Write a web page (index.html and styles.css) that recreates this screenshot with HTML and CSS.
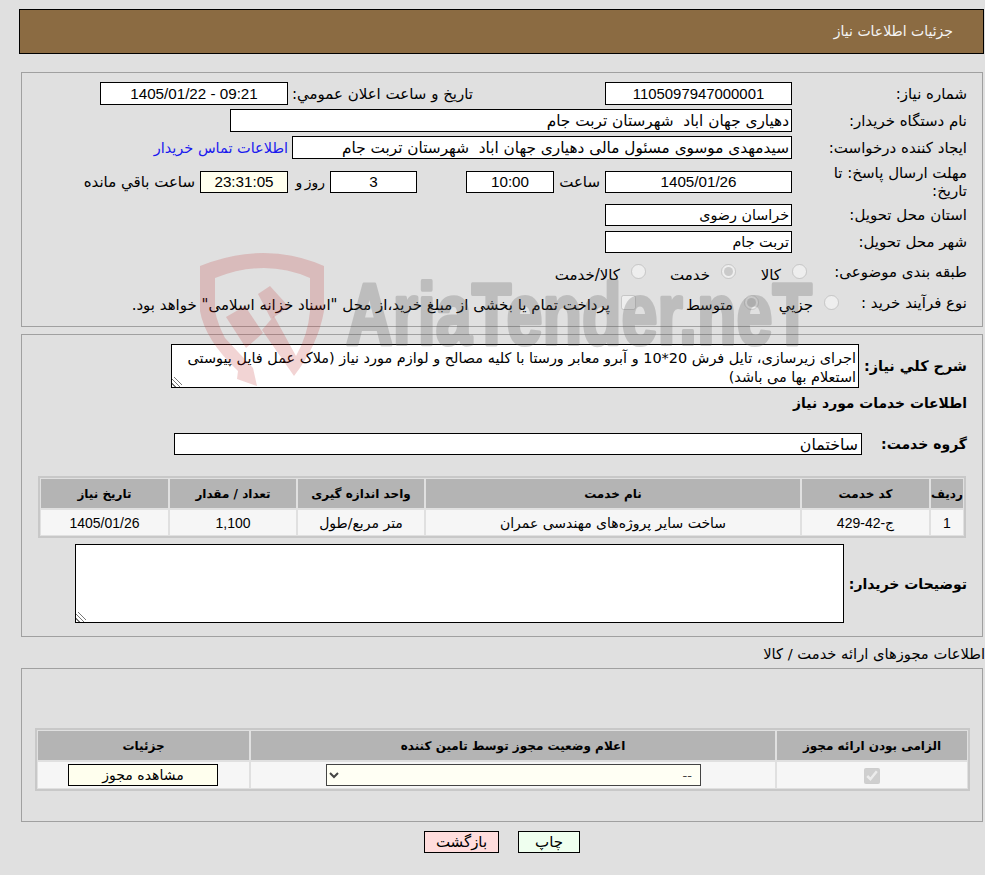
FILE: index.html
```html
<!DOCTYPE html>
<html lang="fa" dir="rtl">
<head>
<meta charset="utf-8">
<title>جزئیات اطلاعات نیاز</title>
<link rel="stylesheet" href="styles.css">
</head>
<body>
<div class="page-title">جزئیات اطلاعات نیاز</div>

<section class="panel panel-main">
  <div class="row r23">
    <div class="label">شماره نیاز:</div>
    <input class="box w187 center num id-num" readonly value="1105097947000001">
    <div class="mid-label">تاریخ و ساعت اعلان عمومي:</div>
    <input class="box w188 center num" readonly value="09:21 - 1405/01/22">
  </div>
  <div class="row r23 mt4">
    <div class="label">نام دستگاه خریدار:</div>
    <input class="box w562 wide-text" readonly value="دهیاری جهان اباد  شهرستان تربت جام">
  </div>
  <div class="row r23 mt4">
    <div class="label">ایجاد کننده درخواست:</div>
    <input class="box w500 wide-text" readonly value="سیدمهدی موسوی مسئول مالی دهیاری جهان اباد  شهرستان تربت جام">
    <a class="contact" href="#">اطلاعات تماس خریدار</a>
  </div>
  <div class="row r33 mt6">
    <div class="label">مهلت ارسال پاسخ: تا تاریخ:</div>
    <input class="box w187 center num" readonly value="1405/01/26">
    <span class="txt ml-hour">ساعت</span>
    <input class="box w88 center num" readonly value="10:00">
    <input class="box w87 center num gap-days" readonly value="3">
    <span class="txt ml-day">روز و</span>
    <input class="box w88 center num pale" readonly value="23:31:05">
    <span class="txt ml-left">ساعت باقي مانده</span>
  </div>
  <div class="row r22 mt6">
    <div class="label">استان محل تحویل:</div>
    <input class="box w187 small-text" readonly value="خراسان رضوی">
  </div>
  <div class="row r22 mt5">
    <div class="label">شهر محل تحویل:</div>
    <input class="box w187 small-text" readonly value="تربت جام">
  </div>
  <div class="row r28 mt5 row-cat">
    <div class="label label-cat">طبقه بندی موضوعی:</div>
    <input type="radio" disabled class="radio">
    <span class="opt-text o45">كالا</span>
    <input type="radio" disabled checked class="radio">
    <span class="opt-text o64">خدمت</span>
    <input type="radio" disabled class="radio">
    <span class="opt-text">كالا/خدمت</span>
  </div>
  <div class="row r28 mt3 row-proc">
    <div class="label label-proc">نوع فرآیند خرید :</div>
    <input type="radio" disabled class="radio">
    <span class="opt-text o54">جزيي</span>
    <input type="radio" disabled checked class="radio">
    <span class="opt-text o97">متوسط</span>
    <input type="checkbox" disabled class="check">
    <span class="opt-text">پرداخت تمام یا بخشی از مبلغ خرید،از محل "اسناد خزانه اسلامی" خواهد بود.</span>
  </div>
</section>

<section class="panel panel-items">
  <div class="row desc-row">
    <div class="label strong desc-label">شرح كلي نياز:</div>
    <textarea class="area desc" readonly>اجرای زیرسازی، تایل فرش 20*10 و آبرو معابر ورستا با کلیه مصالح و لوازم مورد نیاز (ملاک عمل فایل پیوستی استعلام بها می باشد)</textarea>
  </div>
  <h2 class="section-head">اطلاعات خدمات مورد نياز</h2>
  <div class="row group-row">
    <div class="label strong group-label">گروه خدمت:</div>
    <input class="box w688 group-input" readonly value="ساختمان">
  </div>
  <table class="grid grid-items">
    <thead>
      <tr><th class="c-rad">ردیف</th><th class="c-code">کد خدمت</th><th class="c-name">نام خدمت</th><th class="c-unit">واحد اندازه گیری</th><th class="c-qty">تعداد / مقدار</th><th class="c-date">تاریخ نیاز</th></tr>
    </thead>
    <tbody>
      <tr><td class="num">1</td><td class="num">ج-42-429</td><td>ساخت سایر پروژه‌های مهندسی عمران</td><td>متر مربع/طول</td><td class="num">1,100</td><td class="num">1405/01/26</td></tr>
    </tbody>
  </table>
  <div class="row notes-row">
    <div class="label strong notes-label">توضیحات خریدار:</div>
    <textarea class="area notes" readonly></textarea>
  </div>
</section>

<div class="permits-title">اطلاعات مجوزهای ارائه خدمت / کالا</div>
<section class="panel panel-permits">
  <table class="grid grid-permits">
    <thead>
      <tr><th class="p-req">الزامی بودن ارائه مجوز</th><th class="p-status">اعلام وضعیت مجوز توسط تامین کننده</th><th class="p-detail">جزئیات</th></tr>
    </thead>
    <tbody>
      <tr>
        <td><input type="checkbox" checked disabled class="req-check"></td>
        <td><select class="status" disabled><option>--</option></select></td>
        <td><button type="button" class="view-btn">مشاهده مجوز</button></td>
      </tr>
    </tbody>
  </table>
</section>

<div class="actions">
  <button type="button" class="btn btn-print">چاپ</button>
  <button type="button" class="btn btn-back">بازگشت</button>
</div>

<svg class="watermark" viewBox="0 0 985 875" aria-hidden="true">
  <path class="wm-red" d="M200 266 Q265 240 324 266 L324 311 Q318 345 294 376 L262 330 L274 316 L296 356 Q308 335 310 311 L310 278 Q265 258 215 278 L215 311 Q218 325 225 338 L253 368 L257 386 L237 379 L238 371 Q205 340 200 311 Z"/>
  <path class="wm-red" d="M270 286 L289 307 L271 319 L258 294 Z"/>
  <path class="wm-red" d="M245 306 L263 333 L246 348 L226 317 Z"/>
  <text class="wm-text" x="346" y="344" textLength="466" lengthAdjust="spacingAndGlyphs">AriaTender.neT</text>
</svg>
</body>
</html>
```
FILE: styles.css
```css
* { box-sizing: border-box; }
html, body { margin: 0; padding: 0; }
body {
  position: relative;
  height: 875px;
  overflow: hidden;
  background: #e0e0e0;
  color: #000;
  font-family: "DejaVu Sans", sans-serif;
  font-size: 15px;
  padding-top: 9px;
}
input, textarea, select, button { font-family: inherit; font-size: inherit; color: #000; }

.page-title {
  height: 45px;
  margin: 0 1px 0 19px;
  padding: 0 30px;
  border: 1px solid #000;
  background: #8b6b42;
  color: #f4f4f4;
  line-height: 42px;
  font-size: 14px;
}

.panel { margin: 0 2px 0 21px; border: 1px solid #a0a0a0; }
.panel-main { margin-top: 18px; height: 255px; padding-top: 9px; }
.panel-items { margin-top: 7px; height: 303px; padding-top: 9px; }
.panel-permits { margin-top: 5px; height: 154px; padding: 59px 12px 0 13px; }

.row { display: flex; align-items: center; }
.r22 { height: 22px; }
.r23 { height: 23px; }
.r28 { height: 28px; }
.r33 { height: 33px; }
.mt3 { margin-top: 3px; }
.mt4 { margin-top: 4px; }
.mt5 { margin-top: 5px; }
.mt6 { margin-top: 6px; }

.label { flex: none; width: 190px; padding-right: 15px; padding-left: 8px; line-height: 18px; }
.label-cat { width: 175px; }
.label-proc { width: 143px; }
.strong { font-weight: bold; font-size: 14px; }

.box {
  flex: none;
  height: 22px;
  padding: 0 2px;
  border: 1px solid #000;
  border-radius: 0;
  outline: 0;
  background: #fff;
  text-align: right;
}
.r23 .box { height: 23px; }
.center { text-align: center; }
.num { font-family: "Liberation Sans", "DejaVu Sans", sans-serif; font-size: 15.2px; }
.id-num { font-size: 14.9px; }
.wide-text { font-size: 15.3px; }
.small-text { font-size: 14.3px; }
.group-input { padding-right: 3px; font-size: 15.8px; }
.pale { background: #ffffee; }
.w87 { width: 87px; }
.w88 { width: 88px; }
.w187 { width: 187px; }
.w188 { width: 188px; }
.w500 { width: 500px; }
.w562 { width: 562px; }
.w688 { width: 688px; }

.mid-label { flex: none; width: 317px; padding-right: 132px; white-space: nowrap; }
.contact { margin-right: 4px; color: #1a1aee; font-size: 14.5px; text-decoration: none; white-space: nowrap; }
.txt { flex: none; white-space: nowrap; }
.ml-hour { margin: 0 5px; width: 41px; }
.gap-days { margin-right: 49px; }
.ml-day { margin: 0 5px; width: 32px; font-size: 14px; word-spacing: -2px; }
.ml-left { margin-right: 5px; }

.radio, .check { flex: none; width: 15px; height: 15px; margin: 0 0 2px; }
.opt-text { flex: none; margin-right: 11px; white-space: nowrap; }
.row-cat .opt-text { padding-top: 5px; }
.row-proc .opt-text { padding-top: 3px; }
.o45 { width: 45px; }
.o54 { width: 54px; }
.o64 { width: 64px; }
.o97 { width: 97px; }

.desc-row { height: 44px; }
.desc-label { width: 123px; padding-left: 0; font-size: 14.4px; }
.area {
  flex: none;
  display: block;
  border: 1px solid #000;
  border-radius: 0;
  outline: 0;
  background: #fff;
  padding: 4px 2px 0;
  font-size: 14.45px;
  line-height: 19px;
}
.area::-webkit-resizer {
  background: linear-gradient(45deg, transparent 2px, #777 2px 3px, transparent 3px 5px, #777 5px 6px, transparent 6px 8px, #777 8px 9px, transparent 9px) left bottom / 10px 10px no-repeat;
}
.desc { width: 688px; height: 44px; }
.section-head { margin: 6px 15px 0 0; font-size: 13.9px; line-height: 18px; font-weight: bold; }
.group-row { height: 22px; margin-top: 21px; }
.group-label { width: 120px; padding-left: 0; }
.grid {
  border: 1px solid #c8c8c8;
  box-shadow: inset 0 0 0 1px #c8c8c8;
  border-spacing: 2px;
  width: 928px;
  margin: 21px 16px 0;
  table-layout: fixed;
  background: #e0e0e0;
}
.grid th { height: 29px; background: #b4b4b4; font-size: 12px; padding: 0; font-weight: bold; }
.grid td { height: 25px; background: #f6f6f6; text-align: center; padding: 0; font-size: 14px; }
.c-rad { width: 32px; }
.c-code { width: 127px; }
.c-name { width: 374px; }
.c-unit { width: 126px; }
.c-qty { width: 126px; }
.c-date { width: 127px; }

.notes-row { margin-top: 6px; height: 79px; }
.notes-label { width: 138px; padding-left: 0; }
.notes { width: 769px; height: 79px; }

.permits-title { margin-top: 8px; height: 18px; font-size: 14.7px; line-height: 18px; white-space: nowrap; }
.grid-permits { width: 935px; margin: 0; }
.grid-permits td { height: 26px; }
.p-req { width: 190px; }
.p-status { width: 524px; }
.p-detail { width: 211px; }
.req-check { width: 16px; height: 16px; margin: 0; vertical-align: middle; }
.status {
  width: 375px;
  height: 22px;
  display: block;
  margin: 0 74px;
  border: 1px solid #444;
  border-radius: 0;
  background-color: #fffff4;
  color: #444;
  font-size: 13px;
  opacity: 1;
  padding: 0 4px;
}
.view-btn {
  width: 150px;
  height: 22px;
  display: block;
  margin: 0 31px 0 0;
  padding: 0;
  border: 1px solid #000;
  background: #ffffee;
  border-radius: 0;
}
.actions { display: flex; justify-content: flex-start; margin: 9px 405px 0 0; }
.btn { height: 22px; padding: 0; border: 1px solid #000; border-radius: 0; }
.btn-print { width: 62px; background: #efffef; }
.btn-back { width: 75px; margin-right: 19px; background: #ffdddd; }

.watermark {
  position: absolute;
  top: 0;
  left: 0;
  width: 985px;
  height: 875px;
  pointer-events: none;
}
.wm-red { fill: #be2828; opacity: 0.2; }
.wm-text {
  direction: ltr;
  font-family: "Liberation Sans", sans-serif;
  font-weight: bold;
  font-size: 88px;
  fill: #5a5a5a;
  stroke: #5a5a5a;
  stroke-width: 4px;
  stroke-linejoin: round;
  opacity: 0.25;
}
```
